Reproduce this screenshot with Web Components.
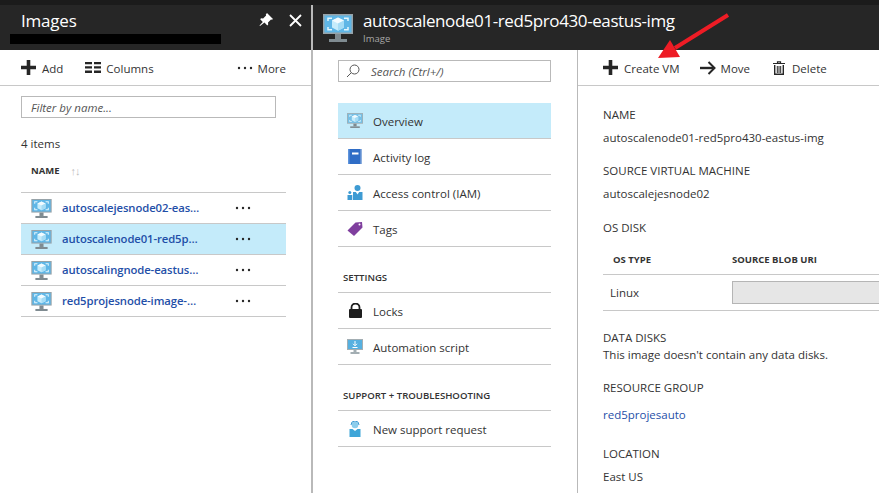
<!DOCTYPE html>
<html><head><meta charset="utf-8"><title>Images</title>
<style>
html,body{margin:0;padding:0;height:493px;width:879px;overflow:hidden;background:#fff;font-family:"Open Sans","Liberation Sans",sans-serif;font-size:11.5px;color:#333}
</style></head><body>
<az-app>
  <az-blade slot="left" style="width:311px">
    <az-list-panel></az-list-panel>
  </az-blade>
  <az-detail></az-detail>
</az-app>
<script>
const VM=(w,h,muted)=>`<svg width="${w}" height="${h}" viewBox="0 0 30 28" style="display:block"><rect x="0" y="0" width="30" height="20" fill="${muted?'#a3aeb3':'#97a3a9'}"/><rect x="1.500" y="1.500" width="27" height="17" fill="${muted?'#76c0e6':'#5fb6e6'}"/><path d="M5 7V4.200h4M25 7V4.200h-4M5 13v2.800h4M25 13v2.800h-4" stroke="#e4f6fd" stroke-width="1.500" fill="none"/><path d="M15 3.500l6 3v7l-6 3.200-6-3.200v-7z" fill="#c6ecfb"/><path d="M15 3.500l6 3-6 3-6-3z" fill="#f2fbff"/><path d="M15 9.500v7.200l6-3.200v-7z" fill="#a5dcf5"/><rect x="12" y="20" width="6" height="5" fill="#7f8b91"/><rect x="6" y="25" width="18" height="3" fill="#7f8b91"/></svg>`;
const ICONS={
 vm:VM(21,19),
 vmsm:VM(16,15,true),
 log:`<svg width="14" height="15" viewBox="0 0 14 15" style="display:block"><rect width="14" height="15" fill="#2f6dc6"/><rect width="1.500" height="15" fill="#5f94dc"/><rect x="4" y="3.500" width="6.500" height="2" fill="#fff"/><rect x="12.500" width="1.500" height="15" fill="#8fb0de"/></svg>`,
 iam:`<svg width="16" height="15" viewBox="0 0 16 15" style="display:block"><circle cx="10.500" cy="3" r="3" fill="#3e9bd3"/><path d="M6 7h9.500v8H6z" fill="#3e9bd3"/><path d="M8.800 7l1.700 2.500L12.200 7z" fill="#fff"/><circle cx="2.800" cy="7.500" r="1.500" fill="#3e9bd3"/><path d="M.5 10h4.800v5H.5z" fill="#3e9bd3"/></svg>`,
 tag:`<svg width="16" height="16" viewBox="0 0 16 16" style="display:block"><path d="M.5 9.500L8.500 1.500l6.500-.5.5 5.500L7 15z" fill="#7f3f9e"/><circle cx="12.500" cy="3.500" r="1" fill="#fff"/></svg>`,
 lock:`<svg width="15" height="15" viewBox="0 0 15 15" style="display:block"><path d="M3.500 7V4.500a4 4 0 0 1 8 0V7" fill="none" stroke="#1e1e1e" stroke-width="1.800"/><rect x="1" y="6" width="13" height="9" rx="1" fill="#1e1e1e"/></svg>`,
 auto:`<svg width="16" height="15" viewBox="0 0 16 15" style="display:block"><rect width="16" height="11" fill="#a3aeb3"/><rect x="1" y="1" width="14" height="9" fill="#56b0e0"/><path d="M8 2v4.500M6 4.800l2 2 2-2M5.500 8.500h5" stroke="#fff" stroke-width="1" fill="none"/><rect x="6.500" y="11" width="3" height="2" fill="#a3aeb3"/><rect x="3.500" y="13" width="9" height="2" fill="#a3aeb3"/></svg>`,
 sup:`<svg width="12" height="16" viewBox="0 0 12 16" style="display:block"><circle cx="6" cy="4" r="3.300" fill="#8ccdec"/><path d="M2 4a4 4 0 0 1 8 0" fill="none" stroke="#3e9bd3" stroke-width="1"/><path d="M.5 8h3L6 10l2.500-2h3v8H.5z" fill="#3ea5d8"/></svg>`,
 plus:`<svg width="15" height="15" viewBox="0 0 15 15" style="display:block"><path d="M5.700 0h3.600v5.700H15v3.600H9.300V15H5.700V9.300H0V5.700h5.700z" fill="#262626"/></svg>`,
 cols:`<svg width="16" height="11" viewBox="0 0 16 11" style="display:block"><path d="M0 0h7v2.300H0zM9 0h7v2.300H9zM0 4.300h7v2.300H0zM9 4.300h7v2.300H9zM0 8.600h7v2.300H0zM9 8.600h7v2.300H9z" fill="#262626"/></svg>`,
 dots:`<svg width="16" height="4" viewBox="0 0 16 4" style="display:block"><circle cx="2" cy="2" r="1.200" fill="#262626"/><circle cx="8" cy="2" r="1.200" fill="#262626"/><circle cx="14" cy="2" r="1.200" fill="#262626"/></svg>`,
 move:`<svg width="16" height="14" viewBox="0 0 16 14" style="display:block"><path d="M0 5.800h13V8.200H0z" fill="#262626"/><path d="M8.500 1l6 6-6 6" fill="none" stroke="#262626" stroke-width="2"/></svg>`,
 trash:`<svg width="12" height="14" viewBox="0 0 12 14" style="display:block"><path d="M0 2.500h12M4.500 2.500V.8h3v1.700" fill="none" stroke="#262626" stroke-width="1.200"/><path d="M1.700 4v9.300h8.600V4" fill="none" stroke="#262626" stroke-width="1.400"/><path d="M4.300 5v7M6 5v7M7.700 5v7" stroke="#262626" stroke-width="1"/></svg>`
};
function def(name,css,html){
  customElements.define(name,class extends HTMLElement{
    connectedCallback(){
      if(this.shadowRoot)return;
      const r=this.attachShadow({mode:'open'});
      r.innerHTML=`<style>${css}</style>`+(typeof html==='function'?html(this):html);
    }
  });
}
def('az-icon',':host{display:flex;align-items:center;justify-content:center}',el=>ICONS[el.getAttribute('name')]);
def('az-cmd',':host{display:inline-flex;align-items:center;gap:var(--g,6px);color:#333;font-size:11.500px;white-space:nowrap}span{margin-top:2px}',el=>`<az-icon name="${el.getAttribute('icon')}"></az-icon><span><slot></slot></span>`);
def('az-row',`:host{display:flex;align-items:center;height:30px;border-bottom:1px solid #c8c8c8}
:host([on]){background:#c4ebfa}
.i{margin-left:10px;width:21px}
a{margin:0 0 2px 10px;width:138px;color:#1f4fa8;font-weight:600;font-size:11.300px;white-space:nowrap;overflow:hidden;text-overflow:ellipsis;letter-spacing:-.1px}
.d{margin-left:35px;width:16px}`,`<az-icon class="i" name="vm"></az-icon><a><slot></slot></a><az-icon class="d" name="dots"></az-icon>`);
def('az-menu',`:host{display:flex;align-items:center;height:35px;border-bottom:1px solid #c8c8c8;color:#333;font-size:11.500px}
:host([on]){background:#c4ebfa}
az-icon{width:20px;margin-left:7px}
span{margin:2px 0 0 8px}`,el=>`<az-icon name="${el.getAttribute('icon')}"></az-icon><span><slot></slot></span>`);
def('az-section',`:host{display:flex;align-items:center;height:30px;padding:1px 0 0 5px;border-bottom:1px solid #c8c8c8;font-size:9.600px;font-weight:600;color:#333}`,`<slot></slot>`);
def('az-prop',`:host{display:block;color:#333;font-size:11.500px}
.l{height:17px;line-height:17px}
.v{line-height:17px;height:17px;margin-top:var(--gap,6px)}
::slotted(a){color:#1f4fa8}`,el=>`<div class="l">${el.getAttribute('label')}</div><div class="v"><slot></slot></div>`);
def('az-list-panel',`:host{display:block}
.cmd{height:35px;border-bottom:1px solid #c8c8c8;display:flex;align-items:center;padding-left:21px;padding-right:25px}
.cmd az-cmd:nth-child(2){margin-left:22px}
.sp{flex:1}
.filter{margin:10px 0 0 21px;width:244px;height:20px;border:1px solid #b9b9b9;display:flex;align-items:center;padding-left:9px;font-style:italic;font-size:11.500px;color:#555}
.count{margin:17px 0 0 21px;height:18px;line-height:18px}
.head{margin:8px 0 0 31px;height:18px;display:flex;align-items:center;font-size:9.500px;font-weight:700;color:#333;gap:11px}
.sort{color:#bdbdbd;font-size:11px;font-weight:400;letter-spacing:-1px}
.list{margin:13px 25px 0 21px;border-top:1px solid #c8c8c8}`,
`<div class="cmd"><az-cmd icon="plus">Add</az-cmd><az-cmd style="--g:5px" icon="cols">Columns</az-cmd><span class="sp"></span><az-cmd style="--g:5px" icon="dots">More</az-cmd></div>
<div class="filter">Filter by name...</div>
<div class="count">4 items</div>
<div class="head"><span>NAME</span><span class="sort">↑↓</span></div>
<div class="list"><az-row>autoscalejesnode02-eastus-img</az-row><az-row on>autoscalenode01-red5pro430-eastus-img</az-row><az-row>autoscalingnode-eastus-img</az-row><az-row>red5projesnode-image-eastus</az-row></div>`);
def('az-blade',`:host{display:flex;flex-direction:column;flex:none;border-right:2px solid #b9b9b9;height:488px}
header{height:45px;background:#262626;flex:none;color:#fff;padding-left:21px;display:flex;position:relative;box-sizing:border-box}
.t{font-size:17px;line-height:24px;margin-top:4px;font-weight:400;letter-spacing:-.2px}
.mask{position:absolute;left:10px;top:29px;width:211px;height:10px;background:#000}
.acts{margin-left:auto;display:flex;gap:16px;margin-top:8px;padding-right:7px;align-items:flex-start}
.acts svg{display:block}`,
`<header><div class="t">Images</div><div class="mask"></div><div class="acts">
<svg width="14" height="14" viewBox="0 0 14 14"><path d="M8 0l6 6-1 .8-1-.3-3 3 .2 2-.9.9-2.800-2.800L1 13l-.5-.5 3.300-3.600L1.200 6.200l.9-.9 2 .2 3-3-.3-1z" fill="#fff"/></svg>
<svg width="13" height="13" viewBox="0 0 13 13" style="margin-top:1px;margin-right:2px"><path d="M1 1l11 11M12 1L1 12" stroke="#fff" stroke-width="1.800"/></svg>
</div></header><slot></slot>`);
def('az-detail',`:host{display:flex;flex-direction:column;flex:1;min-width:0;height:488px;overflow:hidden}
header{height:45px;background:#262626;flex:none;color:#fff;display:flex;align-items:flex-start;padding-left:10px;gap:10px;box-sizing:border-box}
header svg{margin-top:9px}
.tx{margin-top:5px}
.tt{font-size:17px;line-height:22px;white-space:nowrap;letter-spacing:-.4px}
.st{font-size:9.500px;color:#a6a6a6;line-height:11px;margin-top:1px}
.cols{display:flex;flex:1;min-height:0}
nav{width:265px;flex:none;border-right:1px solid #b9b9b9;padding:0 26px 0 25px;box-sizing:border-box}
.search{margin-top:10px;height:20px;width:204px;border:1px solid #b9b9b9;display:flex;align-items:center;font-style:italic;font-size:11.500px;color:#555;padding-left:7px;gap:11px}
.menu{margin-top:21px}
main{flex:1;min-width:0;overflow:hidden}
.cmd{height:35px;border-bottom:1px solid #c8c8c8;display:flex;align-items:center;padding-left:25px}
.cmd az-cmd:nth-child(2){margin-left:20px}.cmd az-cmd:nth-child(3){margin-left:23px}
.body{padding-left:25px}
.oh{display:flex;height:29px;align-items:center;border-bottom:1px solid #c8c8c8;font-size:9.500px;font-weight:700;color:#333;margin-top:9px}
.oh span:first-child{width:129px;padding-left:10px;box-sizing:border-box}
.orow{display:flex;height:35px;align-items:center;border-bottom:1px solid #c8c8c8}
.orow span{width:129px;padding-left:7px;box-sizing:border-box}
.orow i{display:block;flex:1;height:21px;border:1px solid #b5b5b5;background:#e6e6e6;border-right:none}
.t{line-height:17px;height:17px}`,
`<header>${VM(30,28)}<div class="tx"><div class="tt">autoscalenode01-red5pro430-eastus-img</div><div class="st">Image</div></div></header>
<div class="cols"><nav>
<div class="search"><svg width="14" height="14" viewBox="0 0 14 14"><circle cx="8.500" cy="5.500" r="4.500" fill="none" stroke="#555" stroke-width="1"/><path d="M5.200 8.800L1 13" stroke="#555" stroke-width="1"/></svg><span>Search (Ctrl+/)</span></div>
<div class="menu">
<az-menu on icon="vmsm">Overview</az-menu><az-menu icon="log">Activity log</az-menu><az-menu icon="iam">Access control (IAM)</az-menu><az-menu icon="tag">Tags</az-menu>
<az-section style="margin-top:14px">SETTINGS</az-section>
<az-menu icon="lock">Locks</az-menu><az-menu icon="auto">Automation script</az-menu>
<az-section style="margin-top:14px">SUPPORT + TROUBLESHOOTING</az-section>
<az-menu icon="sup">New support request</az-menu>
</div></nav>
<main><div class="cmd"><az-cmd style="--g:6px" icon="plus">Create VM</az-cmd><az-cmd style="--g:5px" icon="move">Move</az-cmd><az-cmd style="--g:7px" icon="trash">Delete</az-cmd></div>
<div class="body">
<az-prop style="margin-top:20px" label="NAME">autoscalenode01-red5pro430-eastus-img</az-prop>
<az-prop style="margin-top:16px" label="SOURCE VIRTUAL MACHINE">autoscalejesnode02</az-prop>
<div class="t" style="margin-top:17px">OS DISK</div>
<div class="oh"><span>OS TYPE</span><span>SOURCE BLOB URI</span></div>
<div class="orow"><span>Linux</span><i></i></div>
<div class="t" style="margin-top:18px">DATA DISKS</div>
<div class="t">This image doesn't contain any data disks.</div>
<az-prop style="margin-top:16px;--gap:10px" label="RESOURCE GROUP"><a>red5projesauto</a></az-prop>
<az-prop style="margin-top:22px" label="LOCATION">East US</az-prop>
</div></main></div>`);
def('az-app',`:host{display:block;position:relative;width:879px;height:493px;overflow:hidden;background:#fff}
.top{height:5px;background:#1b1b1b}
.row{display:flex;height:488px}
.arrow{position:absolute;left:650px;top:10px;pointer-events:none}`,
`<div class="top"></div><div class="row"><slot name="left"></slot><slot></slot></div>
<svg class="arrow" width="85" height="55" viewBox="0 0 85 55"><path d="M78 5L25 38" stroke="#ee1c25" stroke-width="4" fill="none"/><path d="M8 48L20 30 30 47z" fill="#ee1c25"/></svg>`);
</script>
</body></html>
